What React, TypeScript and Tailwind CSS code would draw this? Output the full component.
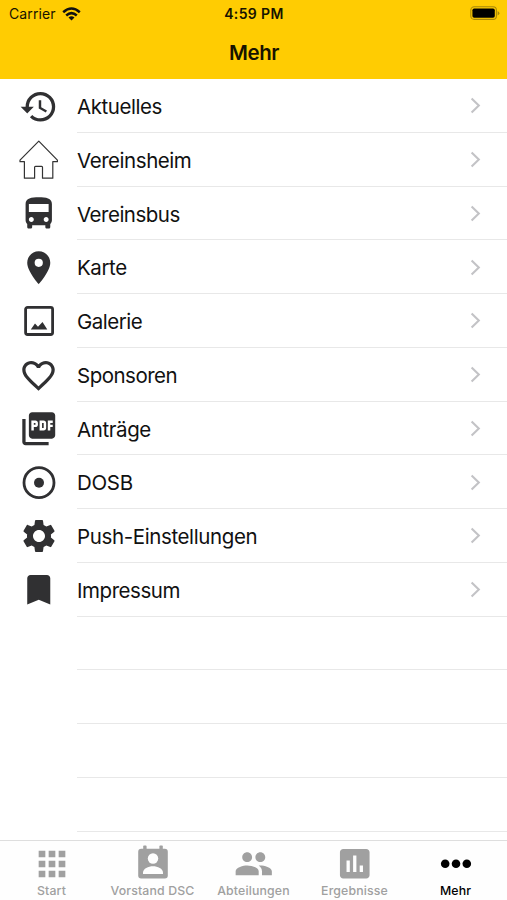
import type { ReactNode } from "react";
import {
  MdApps,
  MdAssessment,
  MdBookmark,
  MdDirectionsBus,
  MdFavoriteBorder,
  MdHistory,
  MdPeople,
  MdPictureAsPdf,
  MdPlace,
  MdSettings,
} from "react-icons/md";

const House = () => (
  <svg width="40" height="40" viewBox="0 0 40 40" fill="none" stroke="#333" strokeWidth="1.2" strokeLinejoin="round">
    <path d="M19.8 1.2 1 20.2V21.7H5.4V38.2H15.6V27.3Q15.6 26.4 16.5 26.4H22.6Q23.5 26.4 23.5 27.3V38.2H33.8V21.7H38.4V20.2Z" />
  </svg>
);

const Photo = () => (
  <svg width="40" height="40" viewBox="0 0 40 40" fill="none">
    <rect x="6.6" y="6.3" width="27" height="27.2" rx="2" stroke="#303032" strokeWidth="2.8" />
    <path d="M11.8 28.4 16 22.6 19 25.7 23.5 21 28.3 28.4Z" fill="#303032" />
  </svg>
);

const Target = () => (
  <svg width="40" height="40" viewBox="0 0 40 40" fill="none">
    <circle cx="20" cy="19.7" r="15" stroke="#303032" strokeWidth="2.8" />
    <circle cx="20" cy="19.7" r="5" fill="#303032" />
  </svg>
);

const Contact = () => (
  <svg width="40" height="40" viewBox="0 0 40 40" fill="currentColor">
    <rect x="10.2" y="1.6" width="3.4" height="6" rx="0.8" />
    <rect x="26.4" y="1.6" width="3.4" height="6" rx="0.8" />
    <rect x="5.2" y="4.8" width="29.6" height="29.8" rx="3" />
    <circle cx="20" cy="14.5" r="5.2" fill="#fefefe" />
    <path d="M10 30V28.6C10 24.6 15.4 22.3 20 22.3S30 24.6 30 28.6V30Z" fill="#fefefe" />
  </svg>
);

const Dots = () => (
  <svg width="40" height="40" viewBox="0 0 40 40" fill="currentColor">
    <circle cx="9.2" cy="19.8" r="4.3" />
    <circle cx="20" cy="19.8" r="4.3" />
    <circle cx="30.8" cy="19.8" r="4.3" />
  </svg>
);

const rows: { label: string; icon: ReactNode; spacing: string }[] = [
  { label: "Aktuelles", icon: <MdHistory size={39.5} />, spacing: "tracking-[-0.45px]" },
  { label: "Vereinsheim", icon: <House />, spacing: "tracking-[-0.45px]" },
  { label: "Vereinsbus", icon: <MdDirectionsBus size={39.5} />, spacing: "tracking-[-0.5px]" },
  { label: "Karte", icon: <MdPlace size={39.5} />, spacing: "tracking-[-0.4px]" },
  { label: "Galerie", icon: <Photo />, spacing: "tracking-[-0.5px]" },
  { label: "Sponsoren", icon: <MdFavoriteBorder size={39} />, spacing: "tracking-[-0.5px]" },
  { label: "Anträge", icon: <MdPictureAsPdf size={39.5} />, spacing: "tracking-[-0.4px]" },
  { label: "DOSB", icon: <Target />, spacing: "tracking-[-0.3px]" },
  { label: "Push-Einstellungen", icon: <MdSettings size={40} />, spacing: "tracking-[-0.38px]" },
  { label: "Impressum", icon: <MdBookmark size={39.5} />, spacing: "tracking-[-0.45px]" },
];

const tabs: { label: string; icon: ReactNode; active?: boolean }[] = [
  { label: "Start", icon: <MdApps size={40} /> },
  { label: "Vorstand DSC", icon: <Contact /> },
  { label: "Abteilungen", icon: <MdPeople size={39.5} /> },
  { label: "Ergebnisse", icon: <MdAssessment size={39.5} /> },
  { label: "Mehr", icon: <Dots />, active: true },
];

export default function App() {
  return (
    <div className="flex h-[900px] w-[507px] flex-col overflow-hidden bg-white font-['Inter','Liberation_Sans',sans-serif] text-[#111]">
      <header className="h-[79px] shrink-0 bg-[#ffcc02] text-[#171300]">
        <div className="grid h-[27px] grid-cols-3 items-center pr-[7px] pl-[9px]">
          <div className="flex items-center gap-[6px]">
            <span className="text-[14px] leading-[27px] tracking-[0.1px]">Carrier</span>
            <svg width="19" height="14" viewBox="0 0 19 14" fill="none" stroke="#111" strokeWidth="2.5">
              <path d="M1.2 5.2Q9.5-2.2 17.8 5.2" />
              <path d="M4.2 8.5Q9.5 3.8 14.8 8.5" />
              <path d="M9.5 13.5 6.5 10.5Q9.5 8 12.5 10.5Z" fill="#111" stroke="none" />
            </svg>
          </div>
          <span className="pr-px text-center text-[14px] leading-[27px] font-semibold tracking-[0.38px] whitespace-nowrap">4:59 PM</span>
          <svg className="justify-self-end" width="30" height="15" viewBox="0 0 30 15">
            <rect x="0.8" y="0.8" width="25.6" height="12.6" rx="3.4" fill="none" stroke="#a88808" strokeWidth="1.1" />
            <rect x="2.4" y="2.5" width="22.4" height="9.2" rx="1.8" fill="#000" />
            <path d="M27.6 5V9.4Q29.4 8.6 29.4 7.2T27.6 5Z" fill="#a88808" />
          </svg>
        </div>
        <h1 className="pl-px text-center text-[20.5px] leading-[51px] font-semibold tracking-[-0.4px]">Mehr</h1>
      </header>

      <main className="h-[761px] shrink-0 overflow-hidden">
        {rows.map(({ label, icon, spacing }) => (
          <div key={label} className="flex h-[53.75px] items-center">
            <div className="flex w-[77px] shrink-0 justify-center pt-px text-[#303032]">{icon}</div>
            <div className="flex h-full flex-1 items-center justify-between border-b border-[#e8e8e8] pr-[25px]">
              <span className={`pt-[4px] text-[20.5px] leading-none whitespace-nowrap ${spacing}`}>{label}</span>
              <svg width="13" height="18" viewBox="0 0 13 18" fill="none" stroke="#c3c3c6" strokeWidth="2.1">
                <path d="M2.6 2.6 9.8 9.6 2.6 16.6" />
              </svg>
            </div>
          </div>
        ))}
        {[0, 1, 2, 3].map((n) => (
          <div key={n} className="ml-[77px] h-[53.75px] border-b border-[#e8e8e8]" />
        ))}
      </main>

      <nav className="grid h-[60px] shrink-0 grid-cols-5 border-t border-[#dedede] bg-[#fefefe] px-px">
        {tabs.map(({ label, icon, active }) => (
          <div key={label} className={`flex flex-col items-center ${active ? "text-black" : "text-[#a0a0a0]"}`}>
            <div className="flex h-[42.5px] items-end">{icon}</div>
            <span className="text-[12.3px] leading-[14px] font-medium tracking-[0.15px] whitespace-nowrap">{label}</span>
          </div>
        ))}
      </nav>
    </div>
  );
}
